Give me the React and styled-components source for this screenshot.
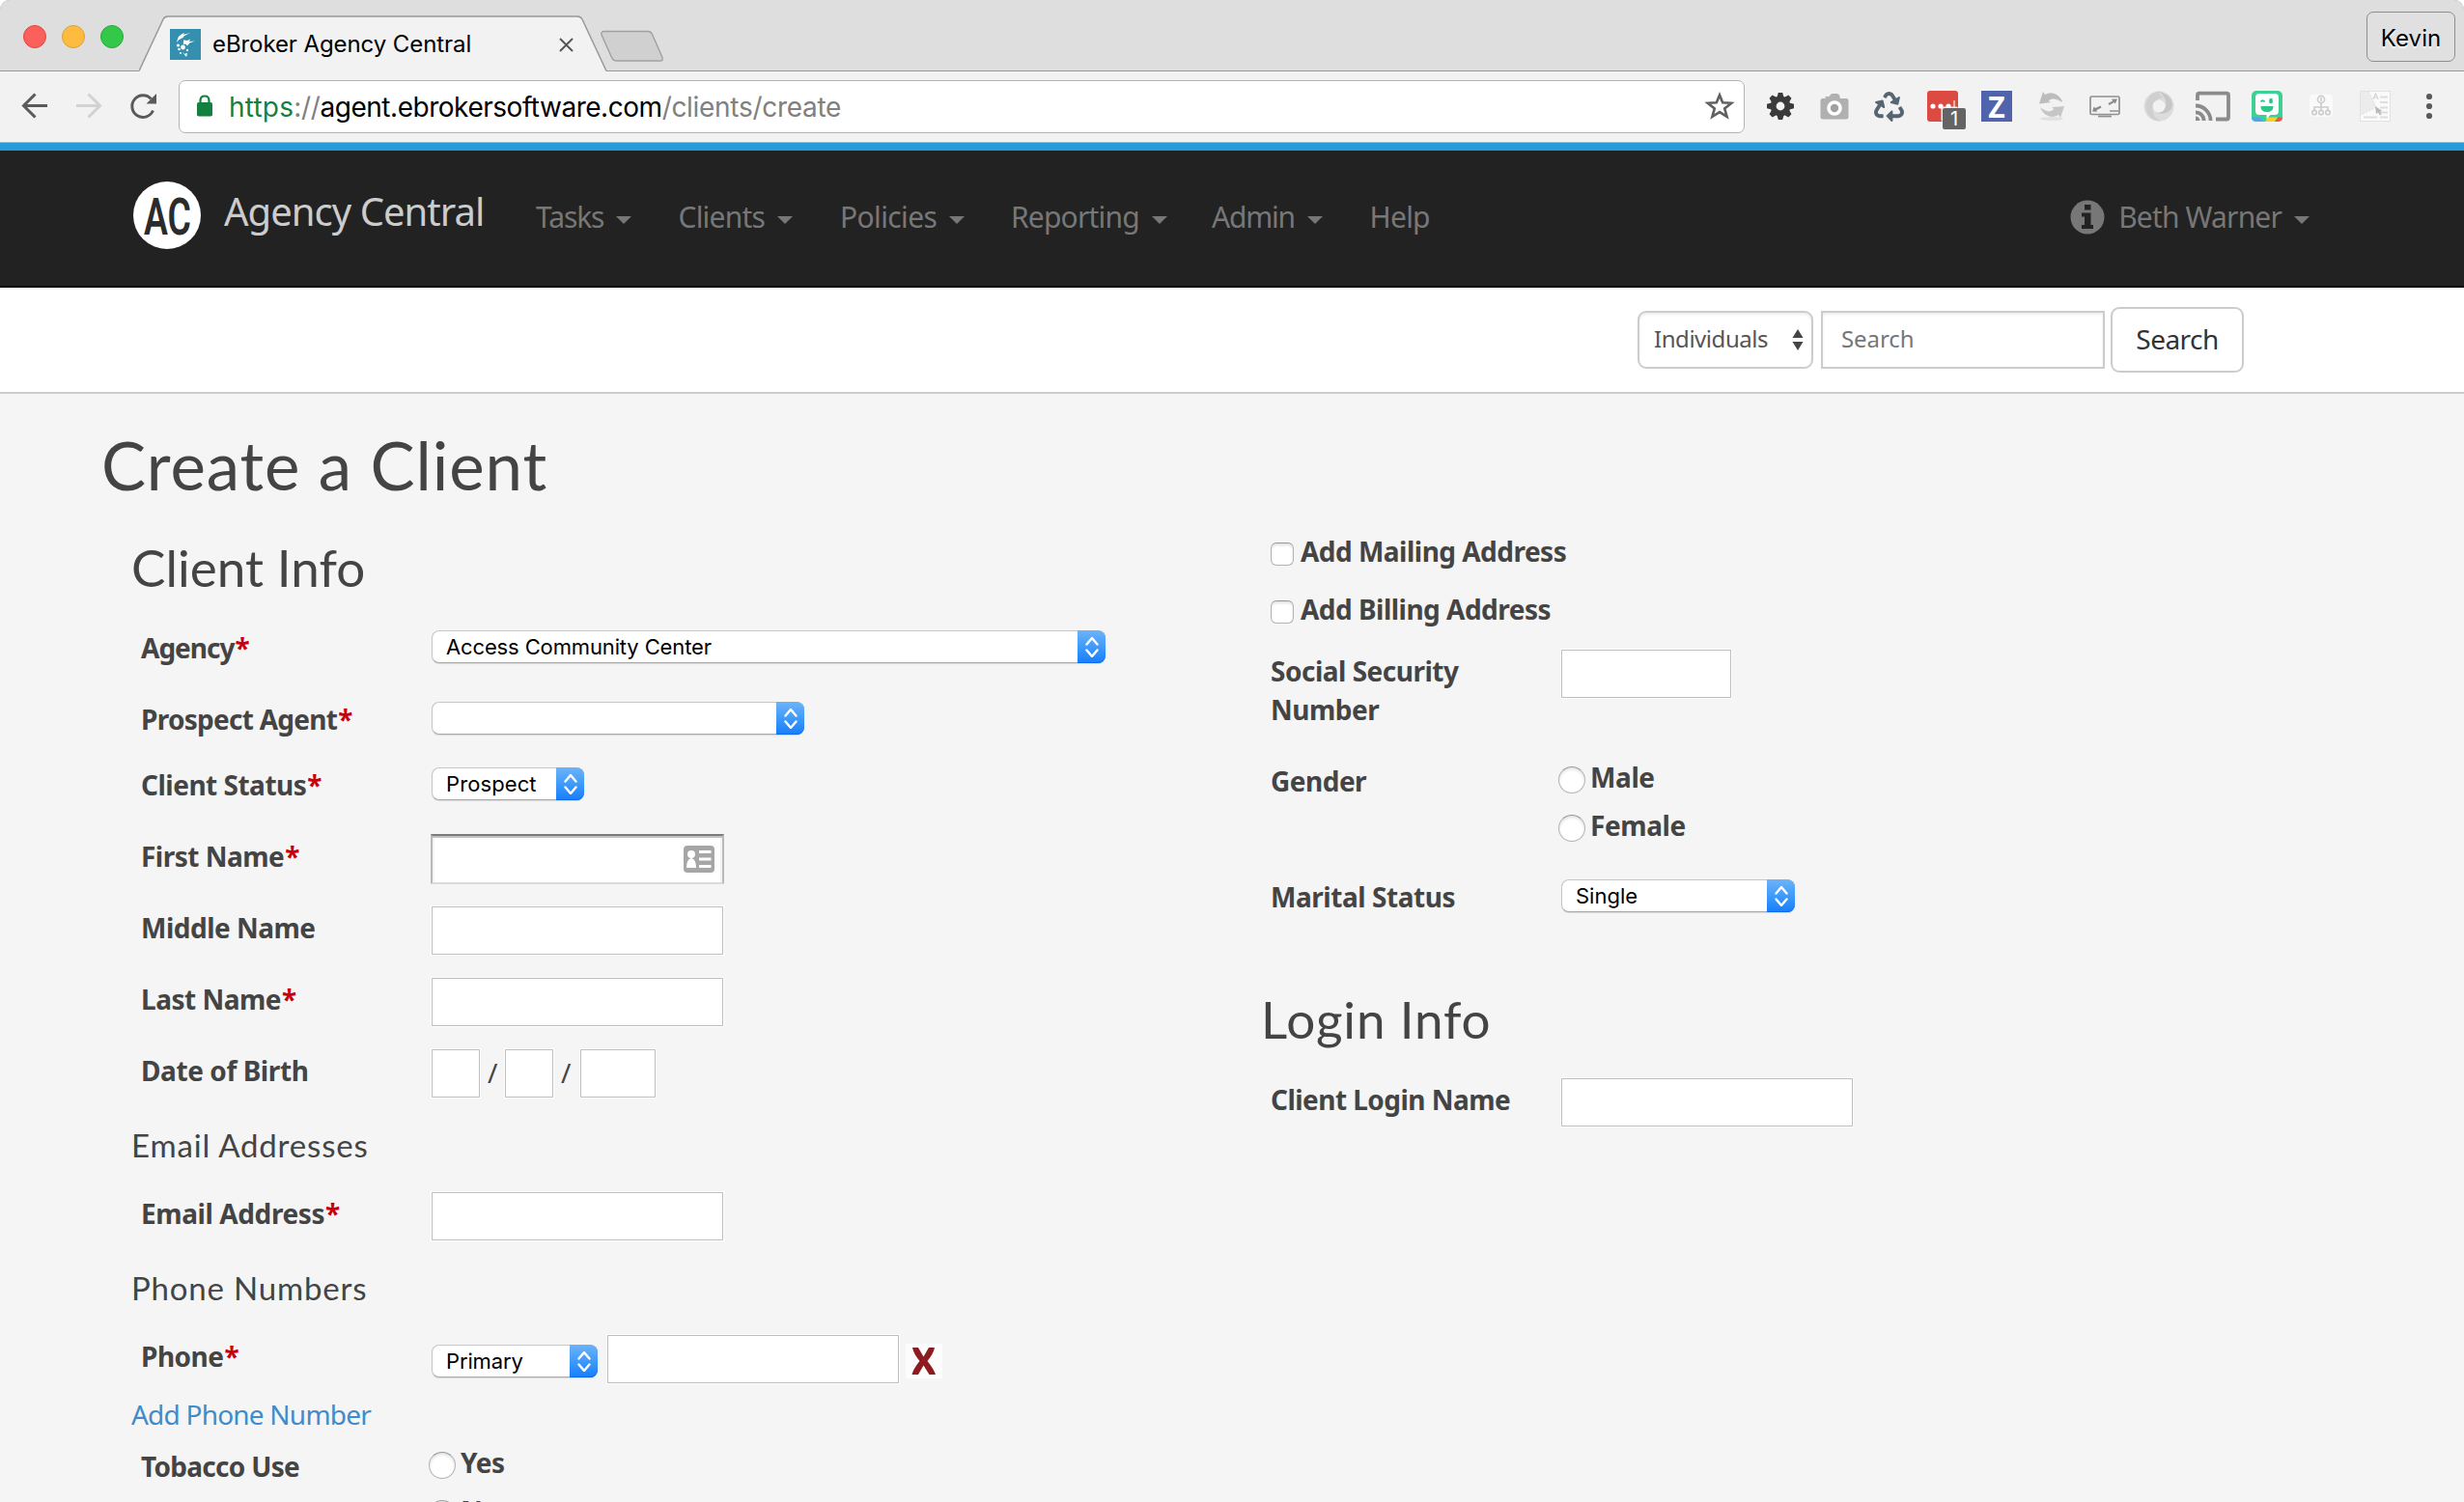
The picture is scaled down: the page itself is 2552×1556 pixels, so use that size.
import React from "react";
import styled, { createGlobalStyle, css } from "styled-components";
import { FaRecycle } from "react-icons/fa";

const NOTO = `"Noto Sans", "Open Sans", sans-serif`;
const SYSTEM = `Inter, Roboto, sans-serif`;
const HEADING = `Lato, sans-serif`;

const GlobalStyle = createGlobalStyle`
  *, *::before, *::after { box-sizing: border-box; }
  html, body { margin: 0; padding: 0; background: #fff; overflow: hidden; }
  svg { display: block; flex: none; }
`;

const Window = styled.div`
  width: 2552px;
  height: 1556px;
  display: flex;
  flex-direction: column;
  overflow: hidden;
  border-radius: 10px 10px 0 0;
  background: #f5f5f5;
  font-family: ${NOTO};
  color: #444;
`;

/* ---------- browser chrome ---------- */

const TabStrip = styled.div`
  flex: none;
  height: 74px;
  display: flex;
  align-items: flex-start;
  padding: 0 9px 0 24px;
  background: linear-gradient(#dedede, #dedede) 0 0 / 100% 73px no-repeat, #999;
`;

const Lights = styled.div`
  display: flex;
  gap: 16px;
  padding-top: 26px;
  width: 120px;
`;

const Light = styled.span`
  width: 24px;
  height: 24px;
  border-radius: 50%;
  background: ${(p) => p.$fill};
  border: 1px solid ${(p) => p.$edge};
`;

const Tab = styled.div`
  position: relative;
  width: 484px;
  height: 74px;
  display: flex;
  align-items: flex-start;
  padding: 30px 0 0 32px;
`;

const TabShape = styled.svg`
  position: absolute;
  left: 0;
  top: 16px;
`;

const Favicon = styled.svg`
  position: relative;
`;

const TabTitle = styled.span`
  position: relative;
  width: 359px;
  margin-left: 12px;
  font: 24px/32px ${SYSTEM};
  letter-spacing: -0.08px;
  color: #000;
`;

const TabClose = styled.svg`
  position: relative;
  margin-top: 9px;
`;

const NewTab = styled.svg`
  margin: 31px auto 0 -7px;
`;

const Profile = styled.div`
  width: 92px;
  height: 52px;
  margin-top: 12px;
  border: 1px solid #8d8d8d;
  border-radius: 7px;
  background: #e0e0e0;
  text-align: center;
  font: 24px/54px ${SYSTEM};
  letter-spacing: 0.1px;
  color: #000;
  text-shadow: 0 2px 1px rgba(255, 255, 255, 0.8);
`;

const Toolbar = styled.div`
  flex: none;
  height: 74px;
  display: flex;
  align-items: center;
  padding: 0 8px 1px;
  background: #f2f2f2;
  border-bottom: 1px solid #b5b1ab;
`;

const Slot = styled.span`
  position: relative;
  width: 56px;
  height: 40px;
  display: flex;
  justify-content: center;
  align-items: center;
`;

const Badge = styled.span`
  position: absolute;
  left: 28px;
  top: 22px;
  width: 24px;
  height: 22px;
  text-align: center;
  border-radius: 2px;
  background: #646464;
  color: #fff;
  font: 20px/22px ${SYSTEM};
`;

const ZTile = styled.span`
  width: 32px;
  height: 32px;
  background: #5163aa;
  color: #fff;
  text-align: center;
  font: 700 30px/33px ${NOTO};
`;

const UrlBar = styled.div`
  width: 1622px;
  height: 55px;
  margin: 0 9px;
  display: flex;
  align-items: center;
  justify-content: space-between;
  padding: 0 8px 0 18px;
  background: #fff;
  border: 1px solid #b4b4b4;
  border-radius: 7px;
`;

const UrlText = styled.span`
  flex: 1;
  margin: 2px 0 0 17px;
  font: 28px/40px ${SYSTEM};
  letter-spacing: -0.3px;
  white-space: nowrap;
  color: #808080;
`;

const Scheme = styled.span`
  color: #14803f;
  letter-spacing: 0.2px;
`;

const Host = styled.span`
  color: #000;
  letter-spacing: -0.47px;
`;

/* ---------- site header ---------- */

const NavBar = styled.header`
  flex: none;
  height: 150px;
  display: flex;
  align-items: center;
  padding: 0 160px 2px 138px;
  background: #222;
  border-top: 8px solid #269cda;
  border-bottom: 2px solid #060606;
`;

const Logo = styled.svg`
  margin-bottom: 4px;
`;

const Brand = styled.span`
  width: 323px;
  margin-left: 24px;
  margin-bottom: 12px;
  font-size: 40px;
  line-height: 56px;
  letter-spacing: -0.97px;
  color: #ccc;
  white-space: nowrap;
`;

const NavItem = styled.a`
  display: flex;
  align-items: center;
  width: ${(p) => (p.$w ? `${p.$w}px` : "auto")};
  font-size: 30px;
  line-height: 40px;
  letter-spacing: ${(p) => p.$ls}px;
  color: #777;
  white-space: nowrap;
`;

const Caret = styled.i`
  margin: 6px 0 0 13px;
  border: 8px solid transparent;
  border-top-color: currentColor;
  border-bottom: 0;
`;

const UserMenu = styled.div`
  display: flex;
  align-items: center;
  gap: 14px;
  margin-left: auto;
`;

const SearchBar = styled.div`
  flex: none;
  height: 110px;
  display: flex;
  align-items: center;
  padding: 0 0 0 1696px;
  background: #fff;
  border-bottom: 2px solid #ccc;
`;

const ScopeSelect = styled.div`
  width: 182px;
  height: 60px;
  display: flex;
  align-items: center;
  justify-content: space-between;
  padding: 0 8px 3px 15px;
  border: 2px solid #ccc;
  border-radius: 9px;
  box-shadow: inset 0 2px 3px rgba(0, 0, 0, 0.07);
  font-size: 24px;
  letter-spacing: -0.45px;
  color: #555;
  svg { margin-top: 3px; }
`;

const SearchInput = styled.input`
  width: 294px;
  height: 60px;
  margin: 0 6px 0 8px;
  padding: 0 19px 3px;
  border: 2px solid #ccc;
  border-radius: 0;
  background: #fff;
  box-shadow: inset 0 2px 3px rgba(0, 0, 0, 0.07);
  font: 24px ${NOTO};
  letter-spacing: -0.1px;
  &::placeholder { color: #777; opacity: 1; }
`;

const SearchButton = styled.button`
  width: 138px;
  height: 68px;
  padding: 0 0 3px;
  border: 2px solid #ccc;
  border-radius: 9px;
  background: #fff;
  font: 28px ${NOTO};
  letter-spacing: -0.56px;
  color: #333;
`;

/* ---------- page ---------- */

const Page = styled.main`
  flex: 1;
  display: flex;
  flex-direction: column;
  min-height: 0;
`;

const PageTitle = styled.h1`
  flex: none;
  height: 136px;
  margin: 0;
  padding: 34px 0 0 105px;
  font: 400 69px/80px ${HEADING};
  letter-spacing: 0.9px;
`;

const Columns = styled.div`
  display: grid;
  grid-template-columns: 1170px 1fr;
  padding-left: 136px;
`;

const Column = styled.section`
  display: flex;
  flex-direction: column;
`;

const SectionTitle = styled.h2`
  margin: 0;
  height: ${(p) => p.$h}px;
  padding-top: ${(p) => p.$top}px;
  font: 400 53px/60px ${HEADING};
  letter-spacing: ${(p) => p.$ls}px;
`;

const SubTitle = styled.h4`
  margin: 0;
  height: 74px;
  padding: 6px 0 0;
  font: 400 33px/40px ${HEADING};
  letter-spacing: 0.83px;
`;

const Row = styled.div`
  display: flex;
  align-items: flex-start;
  height: ${(p) => p.$h || 74}px;
  padding-left: 10px;
`;

const Label = styled.label`
  width: 300px;
  padding-top: 3px;
  padding-right: 40px;
  font-size: 28px;
  font-weight: 700;
  line-height: 40px;
  letter-spacing: ${(p) => p.$ls ?? -0.5}px;
`;

const Required = styled.span`
  margin-left: 1px;
  color: #c7000b;
`;

const TextInput = styled.input`
  width: ${(p) => p.$w || 304}px;
  height: 52px;
  padding: 0 10px;
  border: 1px solid #fff;
  outline: 1px solid #bfbfbf;
  outline-offset: -2px;
  border-radius: 0;
  background: #fff;
  font: 24px ${NOTO};
`;

const FocusedField = styled.div`
  width: 304px;
  height: 52px;
  display: flex;
  align-items: center;
  justify-content: flex-end;
  padding: 0 8px 0 0;
  background: #fff;
  border: 2px solid;
  border-color: #7b7b7b #b9b9b9 #dadada #b9b9b9;
  box-shadow: inset 0 2px 0 #c2c2c2, inset 2px 0 0 #f3f3f3, inset -2px 0 0 #f3f3f3;
`;

const SelectBox = styled.div`
  width: ${(p) => p.$w}px;
  height: 34px;
  margin: ${(p) => p.$mt ?? 5}px 0 0 1px;
  display: flex;
  border: 1px solid #c6c6c6;
  border-bottom-color: #a9a9a9;
  border-radius: 8px;
  background: #fff;
  box-shadow: 0 1px 1px rgba(0, 0, 0, 0.12);
  font: 22px/33px ${SYSTEM};
  letter-spacing: ${(p) => p.$ls || 0}px;
  color: #000;
  padding-left: 14px;
`;

const Stepper = styled.span`
  width: 29px;
  height: 34px;
  margin: -1px -1px 0 auto;
  display: flex;
  align-items: center;
  justify-content: center;
  border-radius: 0 8px 8px 0;
  background: linear-gradient(#6db3f8, #3f9bfb 50%, #157efb);
  box-shadow: inset 0 -1px 0 #0f6af0;
`;

const Slash = styled.span`
  width: ${(p) => p.$w}px;
  padding: 5px 0 0 7px;
  font-size: 28px;
  line-height: 40px;
`;

const PhoneGap = styled.span`
  width: 9px;
`;

const DeleteIcon = styled.svg`
  margin: 10px 0 0 6px;
`;

const AddLink = styled.a`
  height: 51px;
  font-size: 28px;
  line-height: 40px;
  letter-spacing: -0.78px;
  color: #428bca;
`;

const Options = styled.div`
  display: flex;
  flex-direction: column;
  margin: 8px 0 0 -2px;
`;

const Option = styled.label`
  height: 50px;
  display: flex;
  align-items: flex-start;
  gap: 5px;
  font-size: 28px;
  font-weight: 700;
  line-height: 40px;
  letter-spacing: -0.4px;
  span { margin-top: -9px; }
`;

const inset = css`
  flex: none;
  border: 1px solid #b3b3b3;
  border-top-color: #999;
  background: #fff;
  box-shadow: inset 0 2px 3px rgba(0, 0, 0, 0.12);
`;

const Radio = styled.i`
  ${inset}
  width: 28px;
  height: 28px;
  border-radius: 50%;
`;

const CheckRow = styled.label`
  height: 60px;
  display: flex;
  align-items: flex-start;
  gap: 7px;
  padding: 7px 0 0 10px;
  font-size: 28px;
  font-weight: 700;
  line-height: 40px;
  letter-spacing: -0.52px;
`;

const Check = styled.i`
  ${inset}
  width: 24px;
  height: 24px;
  margin-top: 11px;
  border-radius: 6px;
`;

const Spacer = styled.div`
  height: 8px;
`;

/* ---------- pieces ---------- */

function FieldRow({ label, required, h, ls, children }) {
  return (
    <Row $h={h}>
      <Label $ls={ls}>
        {label}
        {required && <Required>*</Required>}
      </Label>
      {children}
    </Row>
  );
}

function Select({ value, w, mt, ls }) {
  return (
    <SelectBox $w={w} $mt={mt} $ls={ls}>
      {value}
      <Stepper>
        <svg width="16" height="22" viewBox="0 0 16 22" fill="none" stroke="#fff" strokeWidth="2.4" strokeLinecap="round" strokeLinejoin="round">
          <path d="M2.5 8.5 8 2l5.5 6.500M2.500 14.500 8 21l5.500-6.500" />
        </svg>
      </Stepper>
    </SelectBox>
  );
}

function RadioGroup({ options }) {
  return (
    <Options>
      {options.map((o) => (
        <Option key={o}>
          <Radio />
          <span>{o}</span>
        </Option>
      ))}
    </Options>
  );
}

function Glyph({ children, ...rest }) {
  return (
    <svg width="40" height="40" viewBox="-20 -20 40 40" fill="none" {...rest}>
      {children}
    </svg>
  );
}

const gearTeeth = [0, 45, 90, 135, 180, 225, 270, 315];

function Extensions() {
  return (
    <>
      <Slot>
        <Glyph>
          <g fill="#3a3a3a">
            {gearTeeth.map((a) => (
              <path key={a} d="M-3.600-9 -2.200-14h4.400L3.600-9z" transform={`rotate(${a})`} />
            ))}
          </g>
          <circle r="7.400" stroke="#3a3a3a" strokeWidth="6" />
        </Glyph>
      </Slot>
      <Slot>
        <Glyph>
          <path d="M-14.500-6q0-2 2-2h3V-10h4l1-1.500q.8-1.500 2.500-1.500h4.500q2 0 2.500 1.500l1 3.500h6.500q2 0 2 2V11q0 2.500-2.500 2.500h-24Q-14.500 13.500-14.500 11z" fill="#b0b0b0" />
          <circle cy="2" r="6" stroke="#fff" strokeWidth="3.600" fill="#a0a0a0" />
        </Glyph>
      </Slot>
      <Slot>
        <FaRecycle size={31} color="#566572" />
      </Slot>
      <Slot>
        <Glyph>
          <rect x="-16" y="-16" width="32" height="32" rx="3" fill="#dc4a41" />
          <circle cx="-10" r="2.600" fill="#fff" />
          <circle cx="-2" r="2.600" fill="#fff" />
          <circle cx="6" r="2.600" fill="#fff" />
          <path d="M12-6V3" stroke="#fff" strokeWidth="1.200" />
          <rect x="-1.500" y=".5" width="17.500" height="15.500" rx="2" fill="#f2f2f2" />
        </Glyph>
        <Badge>1</Badge>
      </Slot>
      <Slot>
        <ZTile>Z</ZTile>
      </Slot>
      <Slot>
        <Glyph>
          <ellipse cx="1" cy="13" rx="12" ry="1.800" fill="#e0e0e0" />
          <path d="M-12-2.500-8-15l2 3q6-3.500 12 0Q11-9 12-4 7-8 2-7.500-2-7-2-5l2 1z" fill="#bcbcbc" />
          <path d="M14 0l-4 12-2-3Q2 12.500-4 9.500-9 7-10.500 1.500-5 6 0 5q3-.7 3-2.500L1 1z" fill="#c6c6c6" />
        </Glyph>
      </Slot>
      <Slot>
        <Glyph>
          <rect x="-15" y="-10" width="30" height="18.500" rx="1.500" stroke="#909090" strokeWidth="1.700" />
          <path d="M-7 10.500H7" stroke="#909090" strokeWidth="1.800" />
          <path d="M5 5h9" stroke="#909090" strokeWidth="1.500" />
          <path d="M-13 5.500l1.800-5 1.400 1.600 5.300-2.600 1 2-5.200 2.700 1 1.600zM13-7.500l-6 .3 1.200 1.600L3.500-3l1 2L9.600-4l1.100 1.500z" fill="#8a8a8a" />
        </Glyph>
      </Slot>
      <Slot>
        <Glyph>
          <circle r="11" stroke="#dcdcdc" strokeWidth="9" />
          <path d="M2-15.500A15.500 15.500 0 1 0 2 15.500 14 14 0 0 1-6.500 3Q-7-7 5-9-3-14 2-15.500z" fill="#cfcfcf" />
          <path d="M-3 7Q7 7 7.500-2 7-11 0-15q13 2 14 14Q12 10-3 7z" fill="#c6c6c6" />
          <circle r="6.200" fill="#f2f2f2" />
        </Glyph>
      </Slot>
      <Slot>
        <Glyph stroke="#8b8b8b" strokeWidth="3.800">
          <path d="M-16-6v-5.500q0-1.800 1.800-1.800H14.200q1.800 0 1.800 1.800v23.200q0 1.800-1.800 1.800H3" />
          <path d="M-18-.5A15.500 15.500 0 0 1-2.500 15M-18 6.300A8.700 8.700 0 0 1-9.300 15" />
          <path d="M-18 10.500a4.500 4.500 0 0 1 4.500 4.500H-18z" fill="#8b8b8b" stroke="none" />
        </Glyph>
      </Slot>
      <Slot>
        <Glyph>
          <rect x="-16" y="-16" width="32" height="32" rx="5" fill="#3ecf95" />
          <path d="M-16 11.500h9l3.500 4.500H-11q-5 0-5-4.500z" fill="#4ea6ea" />
          <path d="M1 11.500h10L8 16H-2z" fill="#fbcf24" />
          <path d="M11.500 11.500H16q0 4.500-5 4.500H8z" fill="#f0564a" />
          <path d="M-8-13H8q4 0 4 4V5q0 4-4 4H3.500L-.5 13.500V9H-8q-4 0-4-4V-9q0-4 4-4z" fill="#fff" />
          <path d="M-6.500 0h13Q6.500 6 0 6t-6.500-6z" fill="#2cc68a" />
          <ellipse cx="4" cy="-5.500" rx="2" ry="2.700" fill="#2cc68a" />
          <path d="M-6.500-4.500q2-2.500 4 0" stroke="#2cc68a" strokeWidth="1.800" />
        </Glyph>
      </Slot>
      <Slot>
        <Glyph>
          <rect x="-12" y="-12" width="24" height="23" rx="4" fill="#fafafa" />
          <g stroke="#cbcbcb" strokeWidth="1.600">
            <circle cy="-7" r="3.600" />
            <path d="M0-9v4M0-3v7M-7 4V1H7V4" />
            <circle cx="-7" cy="6.500" r="2.300" />
            <circle cy="6.500" r="2.300" />
            <circle cx="7" cy="6.500" r="2.300" />
          </g>
        </Glyph>
      </Slot>
      <Slot>
        <Glyph>
          <rect x="-15.500" y="-15.500" width="31" height="31" fill="#fafafa" stroke="#e2e2e2" />
          <path d="M-15-15h8L1 1-15 9z" fill="#ececec" />
          <path d="M-7-15 1 1-15 9" stroke="#dadada" strokeDasharray="2 1.500" />
          <path d="M5-9.500h8M5-4h8M5 1.500h8M5 6.500h8M5 11.500h8M-12 11.500H2" stroke="#dddddd" strokeWidth="2" />
          <path d="M-2-7 .5-13 3-7M-1-9h3" stroke="#d4d4d4" strokeWidth="1.200" />
          <path d="M0 0l1 8 2-1.500 2 3L6.500 8.500 5 5.500 7.500 5z" fill="#b9b9b9" />
        </Glyph>
      </Slot>
      <Slot>
        <Glyph fill="#5a5a5a">
          <circle cy="-10" r="3.100" />
          <circle r="3.100" />
          <circle cy="10" r="3.100" />
        </Glyph>
      </Slot>
    </>
  );
}

const NAV = [
  { label: "Tasks", w: 147.5, ls: -1.1, menu: true },
  { label: "Clients", w: 167.5, ls: -0.79, menu: true },
  { label: "Policies", w: 177, ls: -0.63, menu: true },
  { label: "Reporting", w: 208, ls: -0.81, menu: true },
  { label: "Admin", w: 163.5, ls: -1.2, menu: true },
  { label: "Help", ls: -0.76 },
];

export default function App() {
  return (
    <Window>
      <GlobalStyle />
      <TabStrip>
        <Lights>
          <Light $fill="#fc605b" $edge="#e0443e" />
          <Light $fill="#fdbc40" $edge="#dea034" />
          <Light $fill="#34c84a" $edge="#24a938" />
        </Lights>
        <Tab>
          <TabShape width="486" height="58" viewBox="0 0 486 58">
            <path d="M0 58V57.500L25 4Q26.500 1 30 1H454Q457.500 1 459 4L484 57.500V58z" fill="#f2f2f2" />
            <path d="M0 57.500L25 4Q26.500 1 30 1H454Q457.500 1 459 4L484 57.500" fill="none" stroke="#989898" strokeWidth="1.500" />
          </TabShape>
          <Favicon width="32" height="32" viewBox="0 0 32 32">
            <rect width="32" height="32" fill="#3490ae" />
            <g fill="#fff">
              <path d="M7 14q1-8 8-10l-1 2q4-2 7-1.500-6 1.500-7.500 4.500l-2 1q-3 1-4.500 4z" />
              <path d="M14 11.500l4 .500 3-1.500-1 2.500 6-.5-5.500 2-2.500 3-2-2-2 .5z" />
              <circle cx="8.500" cy="17" r="1.600" />
              <circle cx="9.500" cy="21" r="1.300" />
              <circle cx="13.500" cy="19" r="2.400" />
              <circle cx="11" cy="25" r="1" />
              <circle cx="18" cy="22" r="1.200" />
              <circle cx="17" cy="26" r="1" />
              <path d="M13 24l5 4-1.500.5z" />
            </g>
          </Favicon>
          <TabTitle>eBroker Agency Central</TabTitle>
          <TabClose width="15" height="15" viewBox="0 0 15 15" stroke="#555" strokeWidth="1.900">
            <path d="M1 1l13 13M14 1L1 14" />
          </TabClose>
        </Tab>
        <NewTab width="68" height="35" viewBox="0 0 68 35">
          <path d="M5 1.500H50q3 0 4.500 3L65 28.500q1 3.500-2 3.500H18q-4 0-5.500-3.500L2 5Q1 1.500 5 1.500z" fill="#d0d0d0" stroke="#a0a0a0" strokeWidth="1.400" />
        </NewTab>
        <Profile>Kevin</Profile>
      </TabStrip>

      <Toolbar>
        <Slot>
          <Glyph stroke="#5a5a5a" strokeWidth="3">
            <path d="M13-.5H-10.500M.5-12.500-11.500-.5.5 11.500" />
          </Glyph>
        </Slot>
        <Slot>
          <Glyph stroke="#d2d2d2" strokeWidth="3">
            <path d="M-13-.5H10.500M-.5-12.500 11.500-.5-.5 11.500" />
          </Glyph>
        </Slot>
        <Slot>
          <Glyph stroke="#5a5a5a" strokeWidth="3">
            <path d="M10.500 4.500A11.300 11.300 0 1 1 8.500-7.500" />
            <path d="M14-13V-2.500H3.500z" fill="#5a5a5a" stroke="none" />
          </Glyph>
        </Slot>
        <UrlBar>
          <svg width="16" height="24" viewBox="0 0 16 24">
            <rect y="8" width="16" height="14.500" rx="1.800" fill="#14803f" />
            <path d="M3.500 9V6q0-4.500 4.500-4.500T12.500 6V9" fill="none" stroke="#14803f" strokeWidth="2.200" />
          </svg>
          <UrlText>
            <Scheme>https</Scheme>://<Host>agent.ebrokersoftware.com</Host>/clients/create
          </UrlText>
          <svg width="34" height="34" viewBox="-17 -17 34 34" fill="none" stroke="#5f5f5f" strokeWidth="2.600">
            <path d="M0-11.500 3.200-3.700 12.200-3.200 5.200 2.400 7.600 10.800 0 6.100-7.600 10.800-5.200 2.400-12.200-3.200-3.200-3.700z" />
          </svg>
        </UrlBar>
        <Extensions />
      </Toolbar>

      <NavBar>
        <Logo width="70" height="70" viewBox="0 0 70 70">
          <circle cx="35" cy="35" r="35" fill="#fff" />
          <text x="11" y="55" textLength="49" lengthAdjust="spacingAndGlyphs" fontFamily="Roboto, sans-serif" fontWeight="600" fontSize="54" fill="#2b2b2b">AC</text>
        </Logo>
        <Brand>Agency Central</Brand>
        {NAV.map((n) => (
          <NavItem key={n.label} $w={n.w} $ls={n.ls}>
            {n.label}
            {n.menu && <Caret />}
          </NavItem>
        ))}
        <UserMenu>
          <svg width="36" height="36" viewBox="0 0 36 36">
            <circle cx="18" cy="18" r="17.500" fill="#777" />
            <path d="M15 5h6.500v5.500H15zM12 13.500h9.500V26H24v4H12v-4h3v-8.500h-3z" fill="#222" />
          </svg>
          <NavItem $ls={-0.83}>
            Beth Warner
            <Caret />
          </NavItem>
        </UserMenu>
      </NavBar>

      <SearchBar>
        <ScopeSelect>
          Individuals
          <svg width="12" height="22" viewBox="0 0 12 22" fill="#444">
            <path d="M6 0l5.500 9H.5zM6 22L.5 13h11z" />
          </svg>
        </ScopeSelect>
        <SearchInput placeholder="Search" />
        <SearchButton>Search</SearchButton>
      </SearchBar>

      <Page>
        <PageTitle>Create a Client</PageTitle>
        <Columns>
          <Column>
            <SectionTitle $h={104} $top={14} $ls={0.05}>Client Info</SectionTitle>
            <FieldRow label="Agency" required ls={-1}>
              <Select value="Access Community Center" w={698} ls={-0.13} />
            </FieldRow>
            <FieldRow label="Prospect Agent" required h={68} ls={-0.72}>
              <Select w={386} />
            </FieldRow>
            <FieldRow label="Client Status" required>
              <Select value="Prospect" w={158} ls={0.1} />
            </FieldRow>
            <FieldRow label="First Name" required>
              <FocusedField>
                <svg width="32" height="28" viewBox="0 0 32 28">
                  <rect width="32" height="28" rx="4" fill="#a6a6a6" />
                  <circle cx="8" cy="9" r="4" fill="#fff" />
                  <path d="M3 23q0-9 5-10 5 1 5 10z" fill="#fff" />
                  <path d="M16 6.500h12.500M16 14h12.500M16 21.500h12.500" stroke="#fff" strokeWidth="3" />
                </svg>
              </FocusedField>
            </FieldRow>
            <FieldRow label="Middle Name"><TextInput /></FieldRow>
            <FieldRow label="Last Name" required><TextInput /></FieldRow>
            <FieldRow label="Date of Birth" ls={-0.42}>
              <TextInput $w={52} />
              <Slash $w={24}>/</Slash>
              <TextInput $w={52} />
              <Slash $w={26}>/</Slash>
              <TextInput $w={80} />
            </FieldRow>
            <SubTitle>Email Addresses</SubTitle>
            <FieldRow label="Email Address" required ls={-0.4}><TextInput /></FieldRow>
            <SubTitle>Phone Numbers</SubTitle>
            <FieldRow label="Phone" required h={63}>
              <Select value="Primary" w={172} mt={11} ls={-0.13} />
              <PhoneGap />
              <TextInput />
              <DeleteIcon width="38" height="36" viewBox="0 0 38 36">
                <rect width="38" height="36" fill="#fcfcfc" />
                <path d="M7 4h6l5.500 9.500L24 4h6q-1 6-7.500 14Q29 26 31 32h-6.500L18.500 22.500 13 32H6.500Q8 26 14.500 18 8 10 7 4z" fill="#8c1c20" />
              </DeleteIcon>
            </FieldRow>
            <AddLink>Add Phone Number</AddLink>
            <FieldRow label="Tobacco Use" ls={-0.7}>
              <RadioGroup options={["Yes", "No"]} />
            </FieldRow>
          </Column>
          <Column>
            <CheckRow><Check />Add Mailing Address</CheckRow>
            <CheckRow><Check />Add Billing Address</CheckRow>
            <Spacer />
            <FieldRow label={<>Social Security<br />Number</>} h={114}>
              <TextInput $w={178} />
            </FieldRow>
            <FieldRow label="Gender" h={120}>
              <RadioGroup options={["Male", "Female"]} />
            </FieldRow>
            <FieldRow label="Marital Status" ls={-0.45}>
              <Select value="Single" w={242} />
            </FieldRow>
            <SectionTitle $h={136} $top={46} $ls={0.85}>Login Info</SectionTitle>
            <FieldRow label="Client Login Name" ls={-0.54}><TextInput /></FieldRow>
          </Column>
        </Columns>
      </Page>
    </Window>
  );
}
